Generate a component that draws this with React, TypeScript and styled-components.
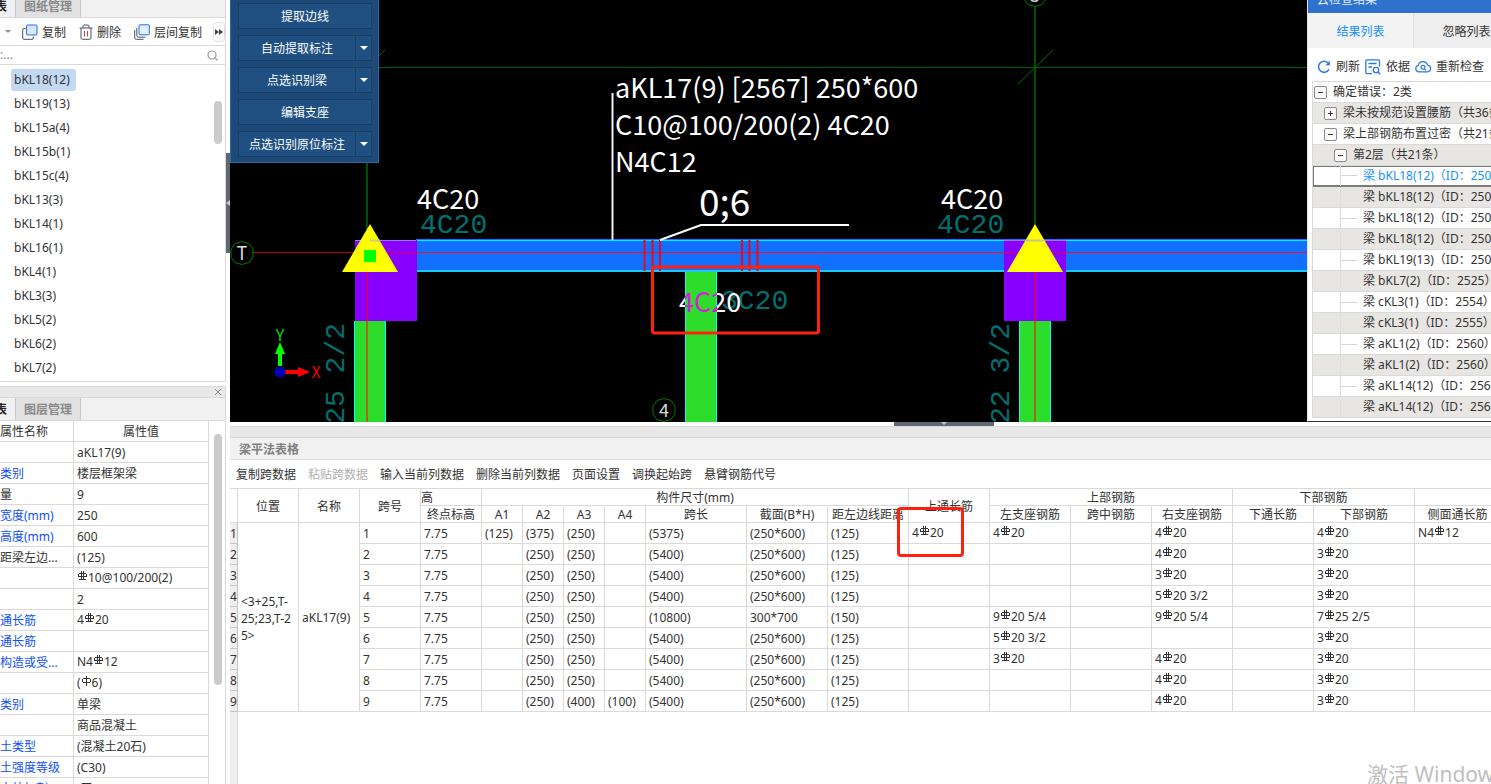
import React from 'react';
import styled, { createGlobalStyle, css } from 'styled-components';

const Global = createGlobalStyle`
  *, *::before, *::after { box-sizing: border-box; }
  body {
    margin: 0;
    background: #fff;
    color: #333;
    font: 12px/16px "Noto Sans", "Noto Sans CJK SC", sans-serif;
  }
  button { font: inherit; color: inherit; border: 0; background: none; padding: 0; cursor: pointer; white-space: nowrap; }
  input { font: inherit; color: inherit; }
`;

const line = '#dadada';

const Shell = styled.div`
  display: flex;
  height: 100vh;
  overflow: hidden;
`;

/* ---------- left column ---------- */

const Side = styled.aside`
  display: flex;
  flex-direction: column;
  flex: 0 0 226px;
  overflow: hidden;
`;

const Panel = styled.section<{ $grow?: boolean }>`
  display: flex;
  flex-direction: column;
  flex: ${p => (p.$grow ? '1 1 0' : '0 0 auto')};
  min-height: 0;
  border-right: 1px solid ${line};
  border-bottom: ${p => (p.$grow ? 0 : 1)}px solid ${line};
  overflow: hidden;
`;

const TabBar = styled.div<{ $cut?: boolean }>`
  display: flex;
  flex: 0 0 23px;
  margin-top: ${p => (p.$cut ? -5 : 0)}px;
  background: #f1f1f1;
  border-bottom: 1px solid ${line};
`;

const Tab = styled.button<{ $on?: boolean }>`
  height: 22px;
  padding-top: 2px;
  font-weight: 700;
  ${p => (p.$on
    ? css`width: 15px; direction: rtl; padding-right: 8px; overflow: hidden; background: #f1f1f1; color: #222;`
    : css`width: 66px; background: #e1e1e1; color: #888; border: 1px solid #c5c9cf; border-width: 0 1px;`)}
`;

const Tools = styled.div`
  display: flex;
  align-items: center;
  flex: 0 0 28px;
  padding-left: 5px;
  border-bottom: 1px solid ${line};
  svg { flex: none; }
`;

const Tool = styled.button<{ $lead: number }>`
  display: flex;
  align-items: center;
  gap: 4px;
  margin-left: ${p => p.$lead}px;
  span { padding-top: 2px; }
`;

const More = styled.button`
  display: grid;
  place-items: center;
  width: 12px;
  height: 20px;
  margin: 0 0 0 auto;
  border: 1px solid #e0e0e0;
  border-radius: 4px;
`;

const Search = styled.label`
  display: flex;
  align-items: center;
  flex: 0 0 19px;
  padding-right: 7px;
  border-bottom: 1px solid ${line};
  input { flex: 1; min-width: 0; height: 16px; border: 0; padding: 0; outline: 0; }
  input::placeholder { color: #888; opacity: 1; }
`;

const Scroller = styled.div`
  display: flex;
  flex: 1 1 auto;
  min-height: 0;
  overflow: hidden;
`;

const Thumb = styled.div<{ $top: number; $len: number }>`
  flex: 0 0 8px;
  height: ${p => p.$len}px;
  margin: ${p => p.$top}px 3px 0 auto;
  border-radius: 4px;
  background: #cbcbcb;
`;

const List = styled.ul`
  list-style: none;
  margin: 0;
  padding: 4px 0 0 11px;
  height: 316px;
`;

const Item = styled.li<{ $on?: boolean }>`
  width: max-content;
  height: 22px;
  margin-bottom: 2px;
  padding: 0 6px 0 3px;
  line-height: 22px;
  border-radius: 3px;
  background: ${p => (p.$on ? '#c3d9f2' : 'transparent')};
`;

const DockStrip = styled.div`
  display: flex;
  justify-content: flex-end;
  align-items: center;
  flex: 0 0 12px;
  padding-right: 3px;
  background: #e8e8e8;
  border-top: 1px solid ${line};
  border-bottom: 1px solid ${line};
  button { display: flex; }
`;

const Gap = styled.div`
  flex: 0 0 4px;
`;

const Props = styled.table`
  flex: 0 0 209px;
  width: 209px;
  table-layout: fixed;
  border-collapse: separate;
  border-spacing: 0;
  align-self: flex-start;
  th, td {
    height: 21px;
    padding: 2px 0 0;
    font-weight: 400;
    text-align: left;
    white-space: nowrap;
    overflow: hidden;
    line-height: 18px;
    border-right: 1px solid ${line};
    border-bottom: 1px solid ${line};
  }
  td { padding-left: 3px; }
  td:has(svg) { padding-top: 0; }
  thead th + th { text-align: center; }
`;

const Name = styled.th<{ $blue?: boolean }>`
  color: ${p => (p.$blue ? '#0f50f5' : '#333')};
`;

const Splitter = styled.div`
  display: flex;
  flex: 0 0 4px;
  padding-top: 153px;
`;

const SideHandle = styled.button`
  display: grid;
  place-items: center;
  width: 4px;
  height: 100px;
  background: #5f6872;
`;

/* ---------- main column ---------- */

const Main = styled.main`
  display: flex;
  flex-direction: column;
  flex: 1 1 0;
  min-width: 0;
`;

const Upper = styled.div`
  display: flex;
  flex: 0 0 422px;
`;

const Canvas = styled.div`
  position: relative;
  flex: 1 1 0;
  min-width: 0;
  background: #000;
  overflow: hidden;
  > svg { display: block; width: 100%; height: 100%; }
`;

const CadText = styled.text<{ $size?: number; $color?: string }>`
  font-family: "Noto Sans CJK SC", sans-serif;
  font-size: ${p => p.$size ?? 27}px;
  fill: ${p => p.$color ?? '#fff'};
`;

const ThinText = styled.text`
  font-family: "Liberation Mono", monospace;
  font-size: 28px;
  fill: #007070;
`;

const CommandPanel = styled.div`
  position: absolute;
  top: 0;
  left: 0;
  display: flex;
  flex-direction: column;
  gap: 6px;
  width: 149px;
  padding: 3px 6px 5px 7px;
  background: #1d4a78;
  border: 1px solid #2b68a4;
  border-top: 0;
`;

const Split = styled.div`
  display: flex;
  height: 26px;
  color: #fff;
  background: #205081;
  border: 1px solid #173f66;
  button:first-child { flex: 1; padding-top: 2px; }
  button + button { display: grid; place-items: center; width: 16px; border-left: 1px solid #173f66; }
`;

/* ---------- check result panel ---------- */

const Check = styled.section`
  display: flex;
  flex-direction: column;
  flex: 0 0 184px;
  overflow: hidden;
  border-left: 1px solid #e6e6e6;
  border-bottom: 1px solid #333;
  background: #fff;
`;

const CheckTitle = styled.h2`
  flex: 0 0 28px;
  margin: -15px 0 0;
  padding: 2px 0 0 9px;
  font-size: 12px;
  font-weight: 400;
  line-height: 26px;
  color: #e4eefb;
  background: #2f72cd;
`;

const CheckTabs = styled.div`
  display: flex;
  flex: 0 0 35px;
`;

const CheckTab = styled.button<{ $on?: boolean }>`
  flex: 0 0 106px;
  padding-top: 2px;
  background: ${p => (p.$on ? '#f3f3f3' : '#eee')};
  color: ${p => (p.$on ? '#1890ff' : '#333')};
  border-right: 1px solid #e2e2e2;
`;

const CheckTools = styled.div`
  display: flex;
  align-items: center;
  gap: 5px;
  flex: 0 0 33px;
  padding: 4px 0 0 9px;
  button { display: flex; align-items: center; gap: 5px; }
`;

const Tree = styled.ul`
  list-style: none;
  flex: 1 1 0;
  margin: 0 0 3px 4px;
  padding: 0;
  border-top: 1px solid ${line};
  border-left: 1px solid ${line};
  overflow: hidden;
`;

const Node = styled.li<{ $alt: boolean; $on?: boolean; $level: number }>`
  display: flex;
  align-items: center;
  gap: 6px;
  height: 21px;
  padding-left: ${p => 1 + p.$level * 10}px;
  white-space: nowrap;
  background: ${p => (p.$alt ? '#e8e6e3' : '#fff')};
  border-bottom: 1px solid ${line};
  ${p => p.$level === 3 && css`padding-left: 27px;`}
  ${p => p.$on && css`
    color: #1890ff;
    border-bottom: 2px solid #7c7c7c;
    box-shadow: inset 0 1px #7c7c7c, inset 1px 0 #7c7c7c;
  `}
`;

const Expander = styled.button`
  display: grid;
  place-items: center;
  flex: 0 0 13px;
  height: 13px;
  background: #fafafa;
  border: 1px solid #8a8a8a;
  border-radius: 2px;
`;

const Branch = styled.span<{ $show: boolean }>`
  display: flex;
  align-items: center;
  flex: 0 0 17px;
  height: 20px;
  border-left: 1px solid #dedede;
  &::before {
    content: '';
    width: 16px;
    border-top: 1px solid ${p => (p.$show ? '#d6d6d6' : 'transparent')};
  }
`;

/* ---------- span table ---------- */

const Lower = styled.section`
  position: relative;
  display: flex;
  flex-direction: column;
  flex: 1 1 0;
  min-height: 0;
  overflow: hidden;
`;

const HandleRow = styled.div`
  flex: 0 0 4px;
  padding-left: 664px;
`;

const LowerHandle = styled.button`
  display: flex;
  justify-content: center;
  width: 100px;
  height: 4px;
  background: #5f6872;
`;

const LowerTitle = styled.h2`
  flex: 0 0 22px;
  margin: 0;
  padding: 2px 0 0 9px;
  font-size: 12px;
  line-height: 19px;
  color: #808080;
  background: #f1f1f1;
  border-bottom: 1px solid ${line};
`;

const Actions = styled.div`
  display: flex;
  gap: 12px;
  flex: 0 0 28px;
  padding: 2px 0 0 6px;
  button:disabled { color: #b0b0b0; }
`;

const GridArea = styled.div`
  position: relative;
  flex: 1 1 0;
  min-height: 0;
  border-top: 1px solid ${line};
  background: linear-gradient(to right, #efefef 7px, ${line} 7px, ${line} 8px, #fff 8px);
  overflow: hidden;
`;

const Grid = styled.table`
  width: 1271px;
  table-layout: fixed;
  border-collapse: separate;
  border-spacing: 0;
  background: #fff;
  th, td {
    padding: 2px 0 0;
    font-weight: 400;
    white-space: nowrap;
    overflow: hidden;
    border-right: 1px solid ${line};
    border-bottom: 1px solid ${line};
  }
  thead th { height: 17px; line-height: 14px; text-align: center; }
  tbody td { height: 21px; line-height: 18px; padding-left: 3px; }
  tbody td:has(svg) { padding-top: 0; }
  tbody th { background: #efefef; border-color: #c4c4c4; line-height: 18px; text-align: left; }
`;

const PlaceCell = styled.td`
  && { line-height: 17px; }
`;

const Leftmost = styled.th`
  && { text-align: left; }
`;

const Mark = styled.div`
  position: absolute;
  top: 18px;
  left: 667px;
  width: 67px;
  height: 50px;
  border: 3px solid #ff2010;
  border-radius: 4px;
`;

const Watermark = styled.div`
  position: absolute;
  right: 0;
  bottom: 0;
  width: 124px;
  height: 24px;
  overflow: hidden;
  white-space: nowrap;
  font-size: 21px;
  line-height: 28px;
  color: #c0c0c0;
`;

const RebarIcon = styled.svg`
  width: 9px;
  height: 10px;
  margin: 0 1px;
  vertical-align: 1px;
`;

/* ---------- small drawings ---------- */

const Rebar = ({ plain }: { plain?: boolean }) => (
  <RebarIcon viewBox="0 0 9 10" fill="none" stroke="#333" shapeRendering="crispEdges">
    {plain
      ? <path d="M1 2.5H8M.5 3V6M8.5 3V6M1 6.5H8M4.5 0V10" />
      : <path d="M1 2.500H8M.5 3V6M8.500 3V6M1 5.500H8M3.500 0V9M5.500 0V9M1 8.500H8" />}
  </RebarIcon>
);

/* "C" marks a ribbed bar and "A" a plain one in the notation */
const Bar = ({ v }: { v: string }) => (
  <>
    {v.split(/([CA])/).map((s, i) =>
      s === 'C' ? <Rebar key={i} /> : s === 'A' ? <Rebar key={i} plain /> : <React.Fragment key={i}>{s}</React.Fragment>)}
  </>
);

const Down = ({ color = '#fff', w = 8 }: { color?: string; w?: number }) => (
  <svg width={w} height={w / 2} viewBox="0 0 8 4"><path d="M0 0H8L4 4Z" fill={color} /></svg>
);

const CopyIcon = () => (
  <svg width="16" height="16" viewBox="0 0 16 16" fill="none">
    <path d="M3.500 4.500H2a1.300 1.300 0 0 0-1.300 1.300V14A1.300 1.300 0 0 0 2 15.300H10A1.300 1.300 0 0 0 11.300 14V12.500" stroke="#4a5260" />
    <rect x="4.500" y="1" width="10.500" height="10" rx="1" fill="#d6e7fb" stroke="#1f6fe0" />
  </svg>
);

const LayerCopyIcon = () => (
  <svg width="16" height="16" viewBox="0 0 16 16" fill="none">
    <path d="M.7 6V13.500A1.800 1.800 0 0 0 2.500 15.300H9.500M2.800 4V11.500A1.700 1.700 0 0 0 4.500 13.200H11.500" stroke="#4a5260" />
    <rect x="5" y=".8" width="10.300" height="10" rx="1" fill="#e4f0fd" stroke="#1f6fe0" />
  </svg>
);

const TrashIcon = () => (
  <svg width="14" height="16" viewBox="0 0 14 16" fill="none">
    <path d="M.5 4H13.500M4 4V2.200A1.200 1.200 0 0 1 5.200 1H8.800A1.200 1.200 0 0 1 10 2.200V4M2 4V14A1.300 1.300 0 0 0 3.300 15.300H10.700A1.300 1.300 0 0 0 12 14V4" stroke="#4a5260" />
    <path d="M5.500 7V12.500M8.500 7V12.500" stroke="#d9363e" />
  </svg>
);

const blue = '#2b79e3';

const RefreshIcon = () => (
  <svg width="14" height="14" viewBox="0 0 14 14" fill="none">
    <path d="M12 9.200A5.500 5.500 0 1 1 11 3" stroke={blue} strokeWidth="1.500" />
    <path d="M12.800 .800V5.200H8.400Z" fill={blue} />
  </svg>
);

const BasisIcon = () => (
  <svg width="16" height="16" viewBox="0 0 16 16" fill="none" stroke={blue} strokeWidth="1.300">
    <path d="M14.500 7.500V2A1.200 1.200 0 0 0 13.300 .800H2A1.200 1.200 0 0 0 .800 2V13.500A1.200 1.200 0 0 0 2 14.700H7M3.500 4.500H11.500M3.500 8H7" />
    <circle cx="11" cy="11" r="2.700" />
    <path d="M13 13L15.300 15.300" />
  </svg>
);

const CloudIcon = () => (
  <svg width="16" height="13" viewBox="0 0 16 13" fill="none" stroke={blue} strokeWidth="1.200">
    <path d="M4 11.800A3.300 3.300 0 0 1 3.300 5.300A4.800 4.800 0 0 1 12.600 5.200A3.300 3.300 0 0 1 12 11.800Z" />
    <circle cx="8" cy="7.300" r="1.900" />
    <path d="M9.500 8.800L11 10.300" />
  </svg>
);

/* ---------- data ---------- */

const beams = ['bKL18(12)', 'bKL19(13)', 'bKL15a(4)', 'bKL15b(1)', 'bKL15c(4)', 'bKL13(3)', 'bKL14(1)', 'bKL16(1)', 'bKL4(1)', 'bKL3(3)', 'bKL5(2)', 'bKL6(2)', 'bKL7(2)'];

const props: [string, string, boolean?][] = [
  ['', 'aKL17(9)'],
  ['类别', '楼层框架梁', true],
  ['量', '9'],
  ['宽度(mm)', '250', true],
  ['高度(mm)', '600', true],
  ['距梁左边...', '(125)'],
  ['', 'C10@100/200(2)'],
  ['', '2'],
  ['通长筋', '4C20', true],
  ['通长筋', '', true],
  ['构造或受...', 'N4C12', true],
  ['', '(A6)'],
  ['类别', '单梁', true],
  ['', '商品混凝土'],
  ['土类型', '(混凝土20石)', true],
  ['土强度等级', '(C30)', true],
  ['土外加剂', '(无)', true],
];

const nodes: { level: number; text: string; open?: boolean; on?: boolean }[] = [
  { level: 0, text: '确定错误：2类', open: true },
  { level: 1, text: '梁未按规范设置腰筋（共36条）' },
  { level: 1, text: '梁上部钢筋布置过密（共21条）', open: true },
  { level: 2, text: '第2层（共21条）', open: true },
  { level: 3, text: '梁 bKL18(12)（ID：2507）', on: true },
  { level: 3, text: '梁 bKL18(12)（ID：2507）' },
  { level: 3, text: '梁 bKL18(12)（ID：2507）' },
  { level: 3, text: '梁 bKL18(12)（ID：2507）' },
  { level: 3, text: '梁 bKL19(13)（ID：2508）' },
  { level: 3, text: '梁 bKL7(2)（ID：2525）' },
  { level: 3, text: '梁 cKL3(1)（ID：2554）' },
  { level: 3, text: '梁 cKL3(1)（ID：2555）' },
  { level: 3, text: '梁 aKL1(2)（ID：2560）' },
  { level: 3, text: '梁 aKL1(2)（ID：2560）' },
  { level: 3, text: '梁 aKL14(12)（ID：2564）' },
  { level: 3, text: '梁 aKL14(12)（ID：2564）' },
];

const columnWidths = [8, 61, 61, 61, 61, 41, 41, 41, 41, 101, 81, 81, 81, 81, 81, 81, 81, 101, 86];

/* A1, A2, A3, A4, span, section, edge distance, through, left, mid, right, bottom through, bottom, side */
const spans: string[][] = [
  ['(125)', '(375)', '(250)', '', '(5375)', '(250*600)', '(125)', '4C20', '4C20', '', '4C20', '', '4C20', 'N4C12'],
  ['', '(250)', '(250)', '', '(5400)', '(250*600)', '(125)', '', '', '', '4C20', '', '3C20', ''],
  ['', '(250)', '(250)', '', '(5400)', '(250*600)', '(125)', '', '', '', '3C20', '', '3C20', ''],
  ['', '(250)', '(250)', '', '(5400)', '(250*600)', '(125)', '', '', '', '5C20 3/2', '', '3C20', ''],
  ['', '(250)', '(250)', '', '(10800)', '300*700', '(150)', '', '9C20 5/4', '', '9C20 5/4', '', '7C25 2/5', ''],
  ['', '(250)', '(250)', '', '(5400)', '(250*600)', '(125)', '', '5C20 3/2', '', '', '', '3C20', ''],
  ['', '(250)', '(250)', '', '(5400)', '(250*600)', '(125)', '', '3C20', '', '4C20', '', '3C20', ''],
  ['', '(250)', '(250)', '', '(5400)', '(250*600)', '(125)', '', '', '', '4C20', '', '3C20', ''],
  ['', '(250)', '(400)', '(100)', '(5400)', '(250*600)', '(125)', '', '', '', '4C20', '', '3C20', ''],
];

const commands: [string, boolean][] = [
  ['提取边线', false],
  ['自动提取标注', true],
  ['点选识别梁', true],
  ['编辑支座', false],
  ['点选识别原位标注', true],
];

const AxisBubble = ({ x, y, label }: { x: number; y: number; label: string }) => (
  <g transform={`translate(${x} ${y})`}>
    <path d="M0 -11.500L7 -9.500L11 -4V4L7 9.500L0 11.500L-7 9.500L-11 4V-4L-7 -9.500Z" fill="#000" stroke="#007a00" />
    <CadText $size={18} $color="#ddd" x={0} y={7} textAnchor="middle">{label}</CadText>
  </g>
);

const Column = ({ x, beamX, axis }: { x: number; beamX: number; axis: number }) => (
  <g>
    <rect x={beamX} y="321" width="32" height="101" fill="#2cdd2c" />
    <path d={`M${beamX + 0.5} 321V422M${beamX + 31.5} 321V422`} stroke="#0ff" />
    <rect x={x} y="240" width="62" height="81" fill="#8800ff" />
    <path d={`M${axis} 253V321`} stroke="#c8007a" strokeWidth="2" />
    <path d={`M${axis} 321V422`} stroke="#a8681c" strokeWidth="2" />
  </g>
);

const Drawing = () => (
  <svg role="img" aria-label="梁平面图">
    <defs>
      <linearGradient id="crossing" gradientUnits="userSpaceOnUse" x1="455" y1="0" x2="487" y2="0">
        <stop offset="0" stopColor="#fff" />
        <stop offset="0" stopColor="#d322d3" />
        <stop offset="1" stopColor="#d322d3" />
        <stop offset="1" stopColor="#fff" />
      </linearGradient>
    </defs>
    <rect x="0" y="67" width="100%" height="1" fill="#006400" />
    <path d="M137 0V240M805 6V240" stroke="#004c00" strokeWidth="2" />
    <path d="M120 84L155 50M788 84L823 50" stroke="#006a00" />
    <AxisBubble x={805} y={-5} label="5" />

    <ThinText x="190" y="233">4C20</ThinText>
    <ThinText x="707" y="233">4C20</ThinText>
    <ThinText textAnchor="end" transform="translate(114 323) rotate(-90)">C25 2/2</ThinText>
    <ThinText textAnchor="end" transform="translate(779 323) rotate(-90)">C22 3/2</ThinText>

    <rect x="0" y="252" width="100%" height="1" fill="#c00000" />
    <AxisBubble x={12} y={253} label="T" />
    <rect x="186" y="239" width="100%" height="33" fill="#1170ff" />
    <rect x="140" y="240" width="100%" height="1" fill="#00f0ff" />
    <rect x="186" y="270" width="100%" height="2" fill="#18c8f8" />
    <rect x="140" y="252" width="100%" height="1" fill="#f01030" />
    <Column x={125} beamX={124} axis={137} />
    <Column x={774} beamX={789} axis={805} />
    <path d="M125 240.500H186M774 240.500H836" stroke="#9a78f0" />
    <path d="M125 252.500H186M774 252.500H836" stroke="#e00060" />
    <path d="M140 224L168 272H112Z" fill="#ff0" />
    <path d="M805 224L833 272H777Z" fill="#ff0" />
    <path d="M140 240.500H150M796 240.500H814" stroke="#c8c890" strokeWidth="2" />
    <rect x="134" y="250" width="12" height="12" fill="#0f0" />

    <rect x="455" y="272" width="32" height="150" fill="#2cdd2c" />
    <path d="M455.500 272V422M486.500 272V422" stroke="#0ff" />
    <path d="M414.500 240V271M422.500 240V271M430 240V271M512 240V271M519.500 240V271M527.500 240V271" stroke="#e80820" strokeWidth="2" />
    <path d="M382.500 93V240" stroke="#f0f0f0" strokeWidth="2" />
    <path d="M430 240L471 225H619" fill="none" stroke="#fff" strokeWidth="2" />

    <CadText x="385" y="98">aKL17(9) [2567] 250*600</CadText>
    <CadText x="385" y="135">C10@100/200(2) 4C20</CadText>
    <CadText x="385" y="172">N4C12</CadText>
    <CadText $size={37} x="469" y="216">0;6</CadText>
    <CadText x="187" y="209">4C20</CadText>
    <CadText x="711" y="209">4C20</CadText>
    <ThinText x="491" y="309">3C20</ThinText>
    <CadText $color="url(#crossing)" x="449" y="312">4C20</CadText>
    <rect x="422.500" y="267" width="166" height="66" rx="2" fill="none" stroke="#ff2010" strokeWidth="3" />
    <AxisBubble x={434} y={410} label="4" />

    <path d="M50 366V353" stroke="#0f0" strokeWidth="4" />
    <path d="M50 342L55 354H45Z" fill="#0f0" />
    <path d="M55 372H69" stroke="#f00" strokeWidth="4" />
    <path d="M80 372L68 367V377Z" fill="#f00" />
    <circle cx="50" cy="372" r="5.500" fill="#0000b8" />
    <CadText $size={16} $color="#0d0" x="50" y="341" textAnchor="middle">Y</CadText>
    <CadText $size={16} $color="#e00" x="86" y="378" textAnchor="middle">X</CadText>
  </svg>
);

export default function App() {
  return (
    <>
      <Global />
      <Shell>
        <Side>
          <Panel>
            <TabBar $cut>
              <Tab $on>表</Tab>
              <Tab>图纸管理</Tab>
            </TabBar>
            <Tools>
              <Down color="#888" w={6} />
              <Tool $lead={11}><CopyIcon /><span>复制</span></Tool>
              <Tool $lead={13}><TrashIcon /><span>删除</span></Tool>
              <Tool $lead={13}><LayerCopyIcon /><span>层间复制</span></Tool>
              <More aria-label="更多">
                <svg width="8" height="6" viewBox="0 0 8 6"><path d="M0 0L4 3L0 6ZM4 0L8 3L4 6Z" fill="#3c4352" /></svg>
              </More>
            </Tools>
            <Search>
              <input aria-label="搜索" placeholder=":..." />
              <svg width="11" height="11" viewBox="0 0 11 11" fill="none" stroke="#999" strokeWidth="1.200">
                <circle cx="5" cy="5" r="4" /><path d="M8 8L10.500 10.500" />
              </svg>
            </Search>
            <Scroller>
              <List>
                {beams.map((b, i) => <Item key={b} $on={i === 0}>{b}</Item>)}
              </List>
              <Thumb $top={36} $len={43} />
            </Scroller>
          </Panel>
          <Gap />
          <Panel $grow>
            <DockStrip>
              <button aria-label="关闭">
                <svg width="8" height="8" viewBox="0 0 8 8"><path d="M1 1L7 7M7 1L1 7" stroke="#8a8a8a" /></svg>
              </button>
            </DockStrip>
            <TabBar>
              <Tab $on>表</Tab>
              <Tab>图层管理</Tab>
            </TabBar>
            <Scroller>
              <Props>
                <colgroup><col style={{ width: 74 }} /><col style={{ width: 135 }} /></colgroup>
                <thead><tr><th>属性名称</th><th>属性值</th></tr></thead>
                <tbody>
                  {props.map(([n, v, b], i) => (
                    <tr key={i}>
                      <Name $blue={b}>{n}</Name>
                      <td>{v === '(C30)' ? v : <Bar v={v} />}</td>
                    </tr>
                  ))}
                </tbody>
              </Props>
              <Thumb $top={13} $len={251} />
            </Scroller>
          </Panel>
        </Side>
        <Splitter>
          <SideHandle aria-label="收起">
            <svg width="4" height="6" viewBox="0 0 4 6"><path d="M4 0V6L0 3Z" fill="#c4c8cc" /></svg>
          </SideHandle>
        </Splitter>
        <Main>
          <Upper>
            <Canvas>
              <Drawing />
              <CommandPanel>
                {commands.map(([c, menu]) => (
                  <Split key={c}>
                    <button>{c}</button>
                    {menu && <button aria-label={`${c}选项`}><Down /></button>}
                  </Split>
                ))}
              </CommandPanel>
            </Canvas>
            <Check>
              <CheckTitle>云检查结果</CheckTitle>
              <CheckTabs>
                <CheckTab $on>结果列表</CheckTab>
                <CheckTab>忽略列表</CheckTab>
              </CheckTabs>
              <CheckTools>
                <button><RefreshIcon />刷新</button>
                <button><BasisIcon />依据</button>
                <button><CloudIcon />重新检查</button>
              </CheckTools>
              <Tree>
                {nodes.map((n, i) => (
                  <Node key={i} $level={n.level} $alt={i % 2 === 1} $on={n.on}>
                    {n.level < 3
                      ? (
                        <Expander aria-label={n.open ? '折叠' : '展开'}>
                          <svg width="5" height="5" viewBox="0 0 5 5"><path d={n.open ? 'M0 2.500H5' : 'M0 2.500H5M2.500 0V5'} stroke="#333" /></svg>
                        </Expander>
                      )
                      : <Branch $show={i % 2 === 0} />}
                    {n.text}
                  </Node>
                ))}
              </Tree>
            </Check>
          </Upper>
          <Lower>
            <HandleRow>
              <LowerHandle aria-label="收起">
                <svg width="6" height="3" viewBox="0 0 6 3"><path d="M0 0H6L3 3Z" fill="#c4c8cc" /></svg>
              </LowerHandle>
            </HandleRow>
            <DockStrip />
            <LowerTitle>梁平法表格</LowerTitle>
            <Actions>
              <button>复制跨数据</button>
              <button disabled>粘贴跨数据</button>
              <button>输入当前列数据</button>
              <button>删除当前列数据</button>
              <button>页面设置</button>
              <button>调换起始跨</button>
              <button>悬臂钢筋代号</button>
            </Actions>
            <GridArea>
              <Grid>
                <colgroup>{columnWidths.map((w, i) => <col key={i} style={{ width: w }} />)}</colgroup>
                <thead>
                  <tr>
                    <th rowSpan={2} />
                    <th rowSpan={2}>位置</th>
                    <th rowSpan={2}>名称</th>
                    <th rowSpan={2}>跨号</th>
                    <Leftmost>高</Leftmost>
                    <th colSpan={7}>构件尺寸(mm)</th>
                    <th rowSpan={2}>上通长筋</th>
                    <th colSpan={3}>上部钢筋</th>
                    <th colSpan={2}>下部钢筋</th>
                    <th />
                  </tr>
                  <tr>
                    {['终点标高', 'A1', 'A2', 'A3', 'A4', '跨长', '截面(B*H)', '距左边线距离', '左支座钢筋', '跨中钢筋', '右支座钢筋', '下通长筋', '下部钢筋', '侧面通长筋'].map(h => <th key={h}>{h}</th>)}
                  </tr>
                </thead>
                <tbody>
                  {spans.map((cells, i) => (
                    <tr key={i}>
                      <th>{i + 1}</th>
                      {i === 0 && <PlaceCell rowSpan={9}>&lt;3+25,T-<br />25;23,T-2<br />5&gt;</PlaceCell>}
                      {i === 0 && <td rowSpan={9}>aKL17(9)</td>}
                      <td>{i + 1}</td>
                      <td>7.75</td>
                      {cells.map((c, k) => <td key={k}><Bar v={c} /></td>)}
                    </tr>
                  ))}
                </tbody>
              </Grid>
              <Mark />
            </GridArea>
            <Watermark>激活 Windows</Watermark>
          </Lower>
        </Main>
      </Shell>
    </>
  );
}
